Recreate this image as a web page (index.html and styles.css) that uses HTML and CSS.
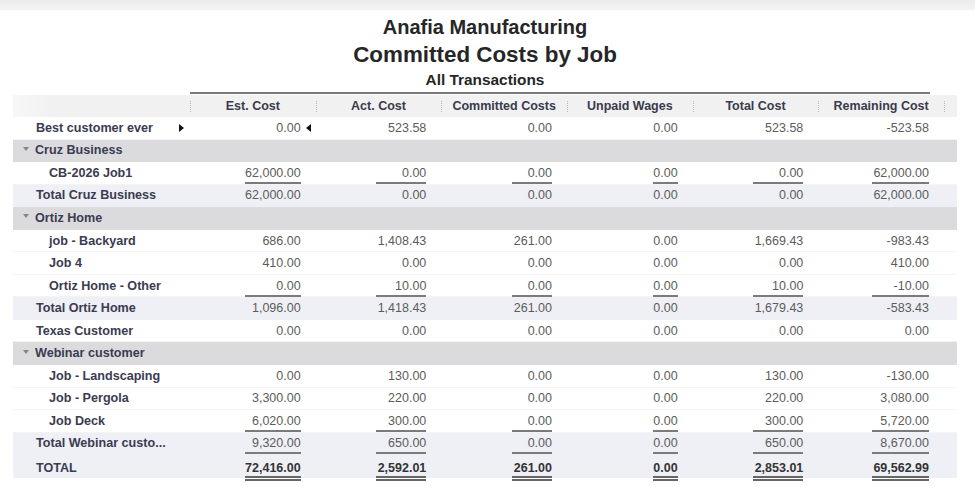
FILE: index.html
```html
<!DOCTYPE html>
<html lang="en">
<head>
<meta charset="utf-8">
<title>Committed Costs by Job</title>
<link rel="stylesheet" href="styles.css">
</head>
<body>
<div class="topband"></div>
<header class="titles">
  <div class="company">Anafia Manufacturing</div>
  <div class="report">Committed Costs by Job</div>
  <div class="basis">All Transactions</div>
</header>
<section class="report-table">
  <div class="rule"></div>
  <div class="row head">
    <div></div>
    <div class="hcell">Est. Cost</div>
    <div class="hcell">Act. Cost</div>
    <div class="hcell">Committed Costs</div>
    <div class="hcell">Unpaid Wages</div>
    <div class="hcell">Total Cost</div>
    <div class="hcell">Remaining Cost</div>
    <div class="hcell"></div>
  </div>

  <div class="row top">
    <div class="lbl sel-row"><span>Best customer ever</span><i class="sel-r"></i></div>
    <div class="num sel"><span>0.00</span><i class="sel-l"></i></div>
    <div class="num"><span>523.58</span></div>
    <div class="num"><span>0.00</span></div>
    <div class="num"><span>0.00</span></div>
    <div class="num"><span>523.58</span></div>
    <div class="num"><span>-523.58</span></div>
  </div>

  <div class="row group"><div class="lbl"><i class="tri"></i>Cruz Business</div></div>
  <div class="row child ul">
    <div class="lbl">CB-2026 Job1</div>
    <div class="num"><span>62,000.00</span></div>
    <div class="num"><span>0.00</span></div>
    <div class="num"><span>0.00</span></div>
    <div class="num"><span>0.00</span></div>
    <div class="num"><span>0.00</span></div>
    <div class="num"><span>62,000.00</span></div>
  </div>
  <div class="row total">
    <div class="lbl">Total Cruz Business</div>
    <div class="num"><span>62,000.00</span></div>
    <div class="num"><span>0.00</span></div>
    <div class="num"><span>0.00</span></div>
    <div class="num"><span>0.00</span></div>
    <div class="num"><span>0.00</span></div>
    <div class="num"><span>62,000.00</span></div>
  </div>

  <div class="row group"><div class="lbl"><i class="tri"></i>Ortiz Home</div></div>
  <div class="row child">
    <div class="lbl">job - Backyard</div>
    <div class="num"><span>686.00</span></div>
    <div class="num"><span>1,408.43</span></div>
    <div class="num"><span>261.00</span></div>
    <div class="num"><span>0.00</span></div>
    <div class="num"><span>1,669.43</span></div>
    <div class="num"><span>-983.43</span></div>
  </div>
  <div class="row child">
    <div class="lbl">Job 4</div>
    <div class="num"><span>410.00</span></div>
    <div class="num"><span>0.00</span></div>
    <div class="num"><span>0.00</span></div>
    <div class="num"><span>0.00</span></div>
    <div class="num"><span>0.00</span></div>
    <div class="num"><span>410.00</span></div>
  </div>
  <div class="row child ul">
    <div class="lbl">Ortiz Home - Other</div>
    <div class="num"><span>0.00</span></div>
    <div class="num"><span>10.00</span></div>
    <div class="num"><span>0.00</span></div>
    <div class="num"><span>0.00</span></div>
    <div class="num"><span>10.00</span></div>
    <div class="num"><span>-10.00</span></div>
  </div>
  <div class="row total">
    <div class="lbl">Total Ortiz Home</div>
    <div class="num"><span>1,096.00</span></div>
    <div class="num"><span>1,418.43</span></div>
    <div class="num"><span>261.00</span></div>
    <div class="num"><span>0.00</span></div>
    <div class="num"><span>1,679.43</span></div>
    <div class="num"><span>-583.43</span></div>
  </div>

  <div class="row top">
    <div class="lbl">Texas Customer</div>
    <div class="num"><span>0.00</span></div>
    <div class="num"><span>0.00</span></div>
    <div class="num"><span>0.00</span></div>
    <div class="num"><span>0.00</span></div>
    <div class="num"><span>0.00</span></div>
    <div class="num"><span>0.00</span></div>
  </div>

  <div class="row group"><div class="lbl"><i class="tri"></i>Webinar customer</div></div>
  <div class="row child">
    <div class="lbl">Job - Landscaping</div>
    <div class="num"><span>0.00</span></div>
    <div class="num"><span>130.00</span></div>
    <div class="num"><span>0.00</span></div>
    <div class="num"><span>0.00</span></div>
    <div class="num"><span>130.00</span></div>
    <div class="num"><span>-130.00</span></div>
  </div>
  <div class="row child">
    <div class="lbl">Job - Pergola</div>
    <div class="num"><span>3,300.00</span></div>
    <div class="num"><span>220.00</span></div>
    <div class="num"><span>0.00</span></div>
    <div class="num"><span>0.00</span></div>
    <div class="num"><span>220.00</span></div>
    <div class="num"><span>3,080.00</span></div>
  </div>
  <div class="row child ul">
    <div class="lbl">Job Deck</div>
    <div class="num"><span>6,020.00</span></div>
    <div class="num"><span>300.00</span></div>
    <div class="num"><span>0.00</span></div>
    <div class="num"><span>0.00</span></div>
    <div class="num"><span>300.00</span></div>
    <div class="num"><span>5,720.00</span></div>
  </div>
  <div class="row total ul">
    <div class="lbl">Total Webinar custo...</div>
    <div class="num"><span>9,320.00</span></div>
    <div class="num"><span>650.00</span></div>
    <div class="num"><span>0.00</span></div>
    <div class="num"><span>0.00</span></div>
    <div class="num"><span>650.00</span></div>
    <div class="num"><span>8,670.00</span></div>
  </div>
  <div class="row total grand">
    <div class="lbl">TOTAL</div>
    <div class="num"><span>72,416.00</span></div>
    <div class="num"><span>2,592.01</span></div>
    <div class="num"><span>261.00</span></div>
    <div class="num"><span>0.00</span></div>
    <div class="num"><span>2,853.01</span></div>
    <div class="num"><span>69,562.99</span></div>
  </div>
</section>
</body>
</html>
```
FILE: styles.css
```css
* { box-sizing: border-box; margin: 0; padding: 0; }

body {
  background: #fff;
  font-family: "Liberation Sans", Arial, sans-serif;
  width: 975px;
  height: 495px;
  overflow: hidden;
}

.topband {
  height: 10px;
  background: linear-gradient(#ebebeb, #f4f4f4);
}

.titles {
  margin-left: 13px;
  width: 944px;
  text-align: center;
  color: #262626;
  font-weight: bold;
}
.company { margin-top: 7px; font-size: 20px; line-height: 20px; }
.report { margin-top: 5px; font-size: 22.4px; line-height: 26px; }
.basis { margin-top: 2px; font-size: 15.4px; line-height: 20px; }

.report-table {
  margin-left: 13px;
  width: 944px;
}

.rule {
  margin-top: 2px;
  margin-left: 177px;
  width: 740px;
  height: 2px;
  background: #7a7a7a;
}

.row {
  display: grid;
  grid-template-columns: 177px repeat(6, 1fr) 13px;
  height: 22.56px;
  align-items: center;
}

.row.head {
  margin-top: 1px;
  height: 22px;
  background: linear-gradient(to right, #f7f7f7, #f1f1f1 40px, #f1f1f1);
}

.hcell {
  height: 100%;
  display: flex;
  align-items: center;
  justify-content: center;
  font-weight: bold;
  font-size: 12.5px;
  color: #3a3a4c;
  white-space: nowrap;
  background: repeating-linear-gradient(to bottom, #b9b9b9 0 1px, transparent 1px 2px) left center / 1px 11px no-repeat;
}

.row.group { background: #dbdbdd; }
.row.total { background: #eef0f6; }
.row.child, .row.top { box-shadow: inset 0 -1px #f4f4f4; }

.lbl {
  display: flex;
  align-items: center;
  padding-left: 23px;
  font-weight: bold;
  font-size: 12.6px;
  color: #3b3b52;
  white-space: nowrap;
  line-height: 15px;
}
.child .lbl { padding-left: 36px; }
.group .lbl { padding-left: 10px; }

.tri {
  width: 0;
  height: 0;
  margin-right: 6px;
  margin-bottom: 4px;
  border-left: 3.5px solid transparent;
  border-right: 3.5px solid transparent;
  border-top: 4px solid #858585;
}

.sel-row {
  justify-content: space-between;
  padding-right: 6px;
}
.sel-r {
  width: 0;
  height: 0;
  border-top: 4px solid transparent;
  border-bottom: 4px solid transparent;
  border-left: 5px solid #111;
}
.sel-l {
  width: 0;
  height: 0;
  border-top: 4px solid transparent;
  border-bottom: 4px solid transparent;
  border-right: 5px solid #111;
}

.num {
  display: flex;
  justify-content: flex-end;
  align-items: center;
  padding-right: 15px;
  font-size: 12.5px;
  color: #5c5c5c;
}
.num.sel { padding-right: 5px; gap: 5px; }

.num span {
  display: inline-block;
  text-align: right;
  line-height: 15px;
  padding: 3px 0 1px;
  border-bottom: 2px solid transparent;
  white-space: nowrap;
}

.row > .num:nth-child(2) span { min-width: 56px; }
.row > .num:nth-child(3) span { min-width: 50px; }
.row > .num:nth-child(4) span { min-width: 40px; }
.row > .num:nth-child(5) span { min-width: 25px; }
.row > .num:nth-child(6) span { min-width: 50px; }
.row > .num:nth-child(7) span { min-width: 57px; }

.ul .num span { border-bottom-color: #7b7b7b; }

.grand .num span {
  font-weight: bold;
  color: #333;
  padding: 6px 0 0;
  border-bottom: 5px double #666;
}
.grand .lbl { color: #3b3b52; }
```
